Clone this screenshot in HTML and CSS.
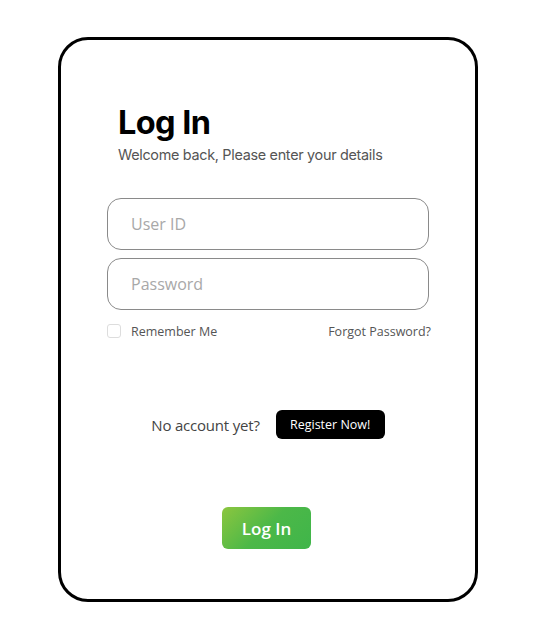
FILE: index.html
```html
<!DOCTYPE html>
<html>
<head>
<meta charset="utf-8">
<link rel="stylesheet" href="styles.css">
</head>
<body>
<div class="card">
  <h1 class="title">Log In</h1>
  <p class="subtitle">Welcome back, Please enter your details</p>
  <div class="field">User ID</div>
  <div class="field">Password</div>
  <div class="options">
    <label class="remember"><span class="check"></span>Remember Me</label>
    <span class="forgot">Forgot Password?</span>
  </div>
  <div class="register-row">
    <span class="no-account">No account yet?</span>
    <span class="register">Register Now!</span>
  </div>
  <div class="login-row">
    <span class="login">Log In</span>
  </div>
</div>
</body>
</html>
```

FILE: styles.css
```css
html, body { margin: 0; padding: 0; background: #fff; }
body { width: 537px; height: 639px; padding-top: 37px; box-sizing: border-box; }
.card {
  margin-left: 58px;
  width: 420px;
  height: 565px;
  box-sizing: border-box;
  border: 3px solid #000;
  border-radius: 30px;
  padding: 63px 46px 0 46px;
  font-family: "Open Sans", sans-serif;
}
.title {
  margin: 0 0 0 11px;
  font-family: Inter, sans-serif;
  font-weight: 700;
  font-size: 32.5px;
  line-height: 40px;
  letter-spacing: -0.6px;
  color: #000;
}
.subtitle {
  margin: 2px 0 0 11px;
  font-family: Inter, sans-serif;
  font-size: 14.4px;
  line-height: 20px;
  color: #555;
  letter-spacing: -0.3px;
}
.field {
  margin-top: 33px;
  height: 52px;
  box-sizing: border-box;
  border: 1.3px solid #8a8a8a;
  border-radius: 14px;
  padding-left: 23px;
  display: flex;
  align-items: center;
  font-size: 16px;
  color: #a8a8a8;
}
.field + .field { margin-top: 8px; }
.options {
  margin-top: 13px;
  display: flex;
  justify-content: space-between;
  align-items: center;
  font-size: 12.5px;
  color: #555;
  height: 16px;
}
.remember { display: flex; align-items: center; gap: 10px; }
.check {
  width: 14px; height: 14px;
  box-sizing: border-box;
  border: 1px solid #ddd;
  border-radius: 3px;
}
.forgot { margin-right: -2px; }
.register-row {
  margin-top: 71px;
  display: flex;
  justify-content: center;
  align-items: center;
  gap: 16px;
}
.no-account { font-size: 15px; color: #444; letter-spacing: -0.2px; }
.register {
  background: #000;
  color: #fff;
  font-size: 12.5px;
  width: 109px;
  height: 29px;
  border-radius: 6px;
  display: flex;
  align-items: center;
  justify-content: center;
}
.login-row {
  margin-top: 68px;
  display: flex;
  justify-content: center;
}
.login {
  width: 89px;
  height: 42px;
  border-radius: 6px;
  background: linear-gradient(135deg, #8cc63f 0%, #4cb848 50%, #3fb54a 100%);
  color: #fff;
  font-weight: 600;
  font-size: 17px;
  display: flex;
  align-items: center;
  justify-content: center;
  margin-right: 3px;
}
```
